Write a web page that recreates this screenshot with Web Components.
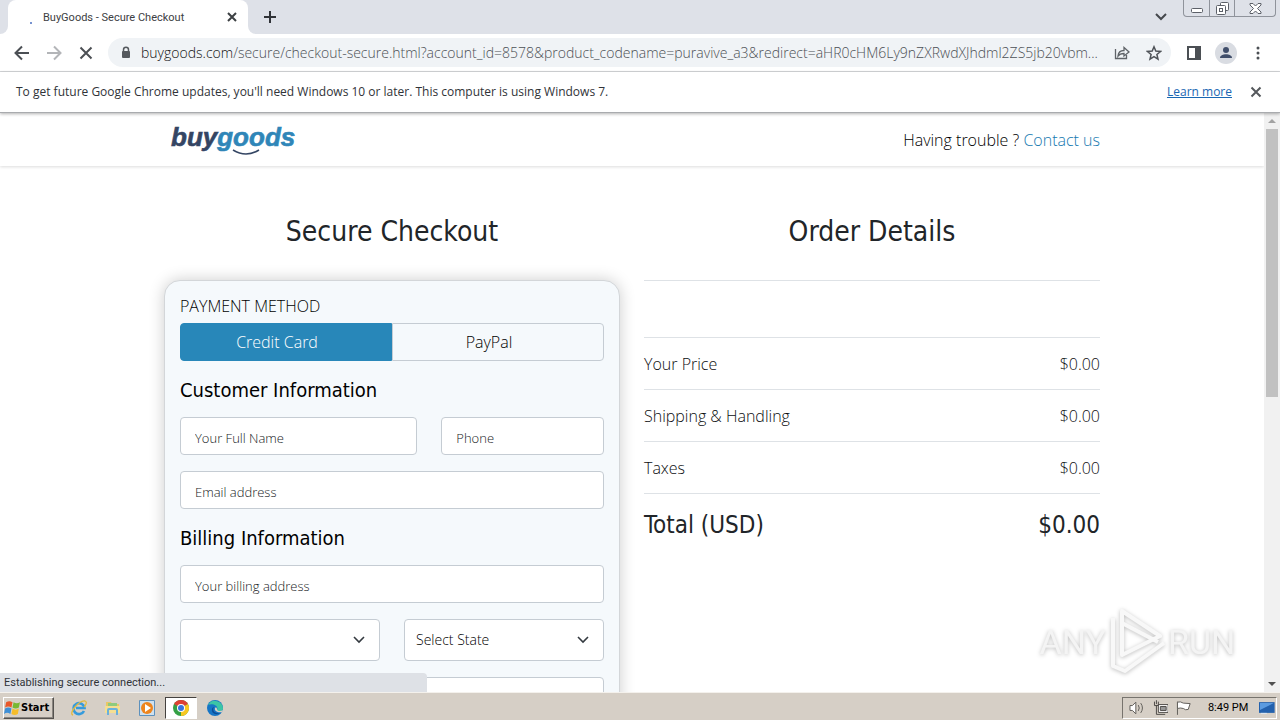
<!DOCTYPE html>
<html lang="en">
<head>
<meta charset="utf-8">
<title>BuyGoods - Secure Checkout</title>
<style>
  :root {
    --ui: "Roboto", "Liberation Sans", sans-serif;
    --text: "Open Sans", "Noto Sans", sans-serif;
    --head: "DejaVu Sans Condensed", "DejaVu Sans", sans-serif;
    --blue: #2887b9;
    --line: #dee2e6;
    --field-line: #c5ccd3;
    --icon: #5f6368;
    --classic: #d6cfc6;
  }
  * { box-sizing: border-box; }
  body { margin: 0; height: 100vh; display: flex; flex-direction: column; overflow: hidden; background: #fff; color: #212529; font-family: var(--text); }
</style>
</head>
<body>
<browser-tabs>BuyGoods - Secure Checkout</browser-tabs>
<browser-toolbar><span slot="host">buygoods.com</span>/secure/checkout-secure.html?account_id=8578&amp;product_codename=puravive_a3&amp;redirect=aHR0cHM6Ly9nZXRwdXJhdml2ZS5jb20vbm...</browser-toolbar>
<browser-notice>To get future Google Chrome updates, you'll need Windows 10 or later. This computer is using Windows 7.<a slot="link" href="#">Learn more</a></browser-notice>
<browser-view>
  <shop-header></shop-header>
  <checkout-columns>
    <h1 slot="left">Secure Checkout</h1>
    <checkout-card slot="left">
      <payment-switch></payment-switch>
      <form-section heading="Customer Information">
        <text-field style="--span: 7" label="Your Full Name"></text-field>
        <text-field style="--span: 5" label="Phone" type="tel"></text-field>
        <text-field label="Email address" type="email"></text-field>
      </form-section>
      <form-section heading="Billing Information">
        <text-field label="Your billing address"></text-field>
        <select-field style="--span: 6" label="Country"></select-field>
        <select-field style="--span: 6" label="State" value="Select State"></select-field>
        <text-field label="City" blank></text-field>
      </form-section>
    </checkout-card>
    <h1 slot="right">Order Details</h1>
    <order-summary slot="right"></order-summary>
  </checkout-columns>
  <any-run-mark slot="overlay"></any-run-mark>
  <status-bubble slot="overlay">Establishing secure connection...</status-bubble>
</browser-view>
<task-bar></task-bar>

<script>
const define = (name, html, setup) => {
  const t = document.createElement('template');
  t.innerHTML = `<style>*{box-sizing:border-box}button{font:inherit;color:inherit;background:none;border:0;padding:0;cursor:default}svg{display:block}</style>${html}`;
  customElements.define(name, class extends HTMLElement {
    constructor() {
      super();
      this.attachShadow({ mode: 'open' }).appendChild(t.content.cloneNode(true));
    }
    connectedCallback() { if (setup) setup(this, this.shadowRoot); }
  });
};

define('browser-tabs', `
<style>
  :host { display: flex; flex: none; height: 34px; background: #dee1e8; font: 11px var(--ui); color: #3c4043; }
  .edge { width: 8px; background: #fff; }
  .edge i { display: block; height: 100%; background: #dee1e8; }
  .edge.l i { border-bottom-right-radius: 8px; }
  .edge.r i { border-bottom-left-radius: 8px; }
  .tab { display: flex; align-items: center; width: 240px; padding: 0 10px 0 16px; background: #fff; border-radius: 8px 8px 0 0; }
  .tab svg { flex: none; }
  .title { flex: 1; padding-left: 3px; font-size: 11px; }
  .new { width: 28px; display: grid; place-items: center; }
  .spacer { flex: 1; }
  .search { display: grid; place-items: center; width: 24px; margin-right: 10px; }
  .window { display: flex; align-items: flex-start; margin-right: 4px; }
  .window div { display: flex; height: 17px; border: 1px solid #8f939b; border-top: 0; border-radius: 0 0 4px 4px; }
  .window button { width: 25px; display: grid; place-items: center; }
  .window button + button { border-left: 1px solid #8f939b; }
  .window button:last-child { width: 41px; }
</style>
<span class="edge l"><i></i></span>
<div class="tab">
  <svg width="16" height="16" viewBox="0 0 16 16"><circle cx="7" cy="14" r="1" fill="#4a6fc0"/></svg>
  <span class="title"><slot></slot></span>
  <button aria-label="Close tab"><svg width="12" height="12" viewBox="0 0 12 12" fill="none" stroke="#3c4043" stroke-width="2"><path d="M2 2l8 8M10 2l-8 8"/></svg></button>
</div>
<span class="edge r"><i></i></span>
<button class="new" aria-label="New tab"><svg width="14" height="14" viewBox="0 0 14 14" fill="none" stroke="#303338" stroke-width="2"><path d="M7 1v12M1 7h12"/></svg></button>
<span class="spacer"></span>
<button class="search" aria-label="Search tabs"><svg width="12" height="8" viewBox="0 0 12 8" fill="none" stroke="#45484d" stroke-width="2"><path d="M1 1l5 5 5-5"/></svg></button>
<div class="window"><div>
  <button aria-label="Minimize"><svg width="12" height="12" viewBox="0 0 12 12" fill="#fff" stroke="#5c6068"><rect x=".5" y="6.5" width="11" height="4" rx="1"/></svg></button>
  <button aria-label="Restore"><svg width="13" height="13" viewBox="0 0 13 13" fill="#fff" stroke="#5c6068"><rect x="4.500" y=".5" width="8" height="8" rx="1"/><rect x=".5" y="3.500" width="9" height="9" rx="1"/><rect x="3.500" y="6.500" width="3" height="3"/></svg></button>
  <button aria-label="Close"><svg width="13" height="11" viewBox="0 0 13 11" fill="#fff" stroke="#5c6068"><path d="M1 .5h3l2.500 2.500L9 .5h3L12 2 8.500 5.500 12 9v1.500H9L6.500 8 4 10.500H1V9l3.500-3.500L1 2z"/></svg></button>
</div></div>`);

define('browser-toolbar', `
<style>
  :host { display: flex; flex: none; align-items: center; height: 38px; padding: 0 13px 0 14px; background: #fff; border-bottom: 1px solid #d5d7da; color: var(--icon); }
  nav { display: flex; gap: 16px; margin-right: 14px; }
  .address { flex: 1; min-width: 0; display: flex; align-items: center; height: 29px; border-radius: 15px; background: #f0f3f6; padding: 0 9px 0 12px; }
  .url { flex: 1; min-width: 0; margin-left: 9px; overflow: hidden; white-space: nowrap; font: 300 14px/20px var(--text); color: #4c5055; }
  ::slotted([slot=host]) { color: #111; }
  .in { display: flex; gap: 16px; margin-left: 12px; }
  .out { display: flex; align-items: center; gap: 12px; margin-left: 14px; }
</style>
<nav>
  <button aria-label="Back"><svg width="16" height="16" viewBox="0 0 16 16" fill="none" stroke="#4b4f54" stroke-width="2"><path d="M15 8H2M8 1.500L1.500 8 8 14.500"/></svg></button>
  <button aria-label="Forward"><svg width="16" height="16" viewBox="0 0 16 16" fill="none" stroke="#b3b5b8" stroke-width="2"><path d="M1 8h13M8 1.500L14.500 8 8 14.500"/></svg></button>
  <button aria-label="Stop"><svg width="16" height="16" viewBox="0 0 16 16" fill="none" stroke="#4b4f54" stroke-width="2"><path d="M2.500 2.500l11 11M13.500 2.500l-11 11"/></svg></button>
</nav>
<div class="address">
  <svg width="12" height="14" viewBox="0 0 12 14"><path d="M3.500 6V3.800a2.500 2.500 0 0 1 5 0V6" fill="none" stroke="#55595e" stroke-width="1.500"/><rect x="2" y="5" width="8" height="7" rx="1" fill="#55595e"/></svg>
  <div class="url"><slot name="host"></slot><slot></slot></div>
  <div class="in">
    <button aria-label="Share"><svg width="16" height="16" viewBox="0 0 16 16" fill="none" stroke="#5f6368" stroke-width="1.300"><path d="M1.500 4v9.500h11V10M4 11c.3-4 2.500-5.500 6-5.500V2.500L15 7l-5 4V8.500C7.500 8.500 5.500 9 4 11z"/></svg></button>
    <button aria-label="Bookmark"><svg width="16" height="16" viewBox="0 0 16 16" fill="none" stroke="#4f5358" stroke-width="1.500"><path d="M8 1.800l1.800 4.300 4.700.4-3.600 3 1.100 4.600L8 11.700l-4 2.400 1.100-4.600-3.600-3 4.700-.4z"/></svg></button>
  </div>
</div>
<div class="out">
  <button aria-label="Side panel"><svg width="18" height="16" viewBox="0 0 18 16"><path d="M3 2h12v12H3z" fill="none" stroke="#4b4f54" stroke-width="2"/><path d="M10 2h5v12h-5z" fill="#4b4f54"/></svg></button>
  <button aria-label="Profile"><svg width="22" height="22" viewBox="0 0 22 22"><circle cx="11" cy="11" r="11" fill="#d9dce2"/><circle cx="11" cy="8" r="3" fill="#414f6b"/><path d="M5 16c0-5 12-5 12 0z" fill="#414f6b"/></svg></button>
  <button aria-label="Menu"><svg width="18" height="16" viewBox="0 0 18 16" fill="#4b4f54"><circle cx="9" cy="3" r="1.500"/><circle cx="9" cy="8" r="1.500"/><circle cx="9" cy="13" r="1.500"/></svg></button>
</div>`);

define('browser-notice', `
<style>
  :host { position: relative; z-index: 1; display: flex; flex: none; align-items: center; height: 41px; padding: 0 18px 0 16px; background: #fff; border-bottom: 1px solid #a9abae; box-shadow: 0 1px 3px rgba(0,0,0,.3); font: 12px/16px var(--text); color: #303338; }
  span { flex: 1; }
  ::slotted(a) { color: #1967b3; margin-right: 18px; }
</style>
<span><slot></slot></span><slot name="link"></slot>
<button aria-label="Dismiss"><svg width="12" height="12" viewBox="0 0 12 12" fill="none" stroke="#55585c" stroke-width="2"><path d="M1.500 1.500l9 9M10.500 1.500l-9 9"/></svg></button>`);

define('browser-view', `
<style>
  :host { position: relative; display: flex; flex: 1; min-height: 0; overflow: hidden; }
  main { flex: 1; overflow: hidden; }
  .bar { display: flex; flex-direction: column; align-items: center; width: 16px; background: #f1f1f1; }
  .bar i { flex: none; height: 16px; display: grid; place-items: center; }
  .track { flex: 1; display: flex; align-items: flex-start; }
  .thumb { width: 12px; height: 49%; background: #c1c1c1; }
</style>
<main><slot></slot></main>
<div class="bar">
  <i><svg width="8" height="4" viewBox="0 0 8 4" fill="#a3a3a3"><path d="M0 4l4-4 4 4z"/></svg></i>
  <div class="track"><div class="thumb"></div></div>
  <i><svg width="8" height="4" viewBox="0 0 8 4" fill="#505050"><path d="M0 0h8L4 4z"/></svg></i>
</div>
<slot name="overlay"></slot>`);

define('shop-header', `
<style>
  :host { display: block; box-shadow: 0 1px 3px rgba(0,0,0,.14); }
  header { display: flex; align-items: center; justify-content: space-between; max-width: 960px; height: 53px; margin: 0 auto; padding: 0 12px 0 18px; }
  p { margin: 0; font: 300 16px/24px var(--text); color: #000; }
  p a { color: #1679b0; text-decoration: none; }
  text { font: italic 700 26px "Liberation Sans", sans-serif; }
</style>
<header>
  <a href="#" aria-label="buygoods home"><svg width="132" height="36" viewBox="0 0 132 36">
    <text x="1" y="24" fill="#344563" stroke="#344563" stroke-width=".6">buy<tspan fill="#2f86b8" stroke="#2f86b8">goods</tspan></text>
    <path d="M63 28q13 8 26 0" fill="none" stroke="#344563" stroke-width="1.500"/>
  </svg></a>
  <p>Having trouble ? <a href="#">Contact us</a></p>
</header>`);

define('checkout-columns', `
<style>
  :host { display: grid; grid-template-columns: 1fr 1fr; gap: 24px; max-width: 960px; margin: 0 auto; padding: 49px 12px 0; }
  ::slotted(h1) { margin: 0 0 31px; text-align: center; font: 28px/34px var(--head); }
</style>
<div><slot name="left"></slot></div>
<div><slot name="right"></slot></div>`);

define('checkout-card', `
<style>
  :host { display: block; padding: 13px 15px 24px; background: #f5f9fc; border: 1px solid #d3d6d9; border-radius: 16px; box-shadow: 0 0 16px rgba(0,0,0,.2); color: #000; }
</style>
<slot></slot>`);

define('payment-switch', `
<style>
  :host { display: block; margin-bottom: 16px; font: 300 16px/24px var(--text); }
  div { display: grid; grid-template-columns: 1fr 1fr; margin-top: 5px; }
  button { height: 38px; padding-right: 18px; border: 1px solid var(--field-line); }
  button:first-child { border-radius: 4px 0 0 4px; }
  button:last-child { border-radius: 0 4px 4px 0; }
  button[aria-pressed=true] { background: var(--blue); border-color: var(--blue); color: #fff; }
</style>
<span>PAYMENT METHOD</span>
<div>
  <button type="button" aria-pressed="true">Credit Card</button>
  <button type="button" aria-pressed="false">PayPal</button>
</div>`, (el, root) => {
  const buttons = root.querySelectorAll('button');
  buttons.forEach((b) => b.addEventListener('click', () => buttons.forEach((o) => o.setAttribute('aria-pressed', o === b))));
});

define('form-section', `
<style>
  :host { display: block; margin-bottom: 16px; }
  h2 { margin: 0 0 14px; font: 20px/26px var(--head); }
  div { display: grid; grid-template-columns: repeat(12, 1fr); gap: 16px 24px; }
  ::slotted(*) { grid-column: span var(--span, 12); }
</style>
<h2></h2>
<div><slot></slot></div>`, (el, root) => {
  root.querySelector('h2').textContent = el.getAttribute('heading');
});

define('text-field', `
<style>
  :host { display: block; min-width: 0; }
  input { display: block; width: 100%; height: 38px; padding: 4px 14px 0; border: 1px solid var(--field-line); border-radius: 4px; background: #fff; font: 300 13px/20px var(--text); outline: 0; }
  input::placeholder { color: #16191c; opacity: 1; }
</style>
<input>`, (el, root) => {
  const input = root.querySelector('input');
  const label = el.getAttribute('label');
  input.type = el.getAttribute('type') || 'text';
  input.setAttribute('aria-label', label);
  if (!el.hasAttribute('blank')) input.placeholder = label;
});

define('select-field', `
<style>
  :host { display: flex; align-items: center; min-width: 0; height: 42px; border: 1px solid var(--field-line); border-radius: 4px; background: #fff; }
  select { flex: 1; min-width: 0; height: 100%; padding: 0 11px; border: 0; background: none; appearance: none; font: 300 14px/20px var(--text); color: #000; outline: 0; }
  svg { flex: none; margin-right: 14px; pointer-events: none; }
</style>
<select><option></option></select>
<svg width="12" height="8" viewBox="0 0 12 8" fill="none" stroke="#343a40" stroke-width="1.600"><path d="M1 1l5 5 5-5"/></svg>`, (el, root) => {
  root.querySelector('select').setAttribute('aria-label', el.getAttribute('label'));
  root.querySelector('option').textContent = el.getAttribute('value') || '';
});

define('order-summary', `
<style>
  :host { display: block; border-top: 1px solid var(--line); padding-top: 56px; }
  table { width: 100%; border-collapse: collapse; font: 300 16px/24px var(--text); color: #0c0e10; }
  tr { border-top: 1px solid var(--line); }
  th, td { height: 52px; padding: 1px 0 0; font-weight: inherit; text-align: left; }
  td { text-align: right; }
  tfoot { font: 24px/30px var(--head); color: #212529; }
  tfoot th, tfoot td { height: 62px; }
</style>
<table>
  <tbody>
    <tr><th scope="row">Your Price</th><td>$0.00</td></tr>
    <tr><th scope="row">Shipping &amp; Handling</th><td>$0.00</td></tr>
    <tr><th scope="row">Taxes</th><td>$0.00</td></tr>
  </tbody>
  <tfoot><tr><th scope="row">Total (USD)</th><td>$0.00</td></tr></tfoot>
</table>`);

define('any-run-mark', `
<style>
  :host { position: absolute; right: 46px; bottom: 16px; pointer-events: none; }
  svg { overflow: visible; filter: drop-shadow(0 1px 2px rgba(0,0,0,.26)); }
  text { font: 34px "Roboto", sans-serif; }
</style>
<svg width="196" height="70" viewBox="0 0 196 70" fill="#f4f4f4">
  <text x="68" y="48" text-anchor="end">ANY</text>
  <g fill="none" stroke="#f8f8f8" stroke-width="4" stroke-linejoin="round"><path d="M84 5v44l38-19z"/><path d="M75 12v48l12 5 39-28"/><path d="M84 17l36 19"/></g>
  <text x="130" y="48">RUN</text>
</svg>`);

define('status-bubble', `
<style>
  :host { position: absolute; left: 0; bottom: 0; width: calc(100% / 3); min-width: 200px; height: 19px; padding: 0 4px; background: #dee1e6; border-top-right-radius: 4px; font: 11px/20px var(--ui); color: #303338; }
</style>
<slot></slot>`);

define('task-bar', `
<style>
  :host { display: flex; flex: none; align-items: center; height: 28px; padding: 2px 3px 0; background: var(--classic); border-top: 1px solid #f4f1ec; font: 11px var(--ui); color: #000; }
  .start { display: flex; align-items: center; gap: 0; height: 22px; width: 51px; padding: 0 2px 0 0; border: 1px solid; border-color: #fff #55524e #55524e #fff; box-shadow: inset -1px -1px #8b8680; font: 700 11px var(--head); }
  .apps { display: flex; flex: 1; gap: 2px; margin-left: 9px; }
  .apps button { width: 32px; height: 22px; display: grid; place-items: center; }
  .apps .on { background: #fff; border: 1px solid; border-color: #45423f #fff #fff #45423f; }
  .tray { display: flex; align-items: center; gap: 8px; height: 22px; width: 155px; padding: 0 1px 0 6px; border: 1px solid; border-color: #77736d #fff #fff #77736d; }
  .tray time { margin: 0 3px 0 8px; white-space: nowrap; }
</style>
<button class="start"><svg width="17" height="17" viewBox="0 0 16 16"><path d="M2 3q3-2 6 0L7 8Q4 6 1 8z" fill="#e8582a"/><path d="M9 3q3 2 6 0l-1 5q-3 2-6 0z" fill="#78b833"/><path d="M1 9q3-2 6 0l-1 5q-3-2-6 0z" fill="#3e8fd6"/><path d="M8 9q3 2 6 0l-1 5q-3 2-6 0z" fill="#f6bd2a"/></svg>Start</button>
<div class="apps">
  <button aria-label="Internet Explorer"><svg width="18" height="18" viewBox="0 0 18 18" fill="none"><path d="M14 12a5.500 5.500 0 1 1 .5-3H6" stroke="#359bdc" stroke-width="2.600"/><path d="M3 16C-2 15 9 1 15 2c3 1 0 5-1 6" stroke="#e2ba3f" stroke-width="1.300"/></svg></button>
  <button aria-label="Explorer"><svg width="18" height="16" viewBox="0 0 18 16"><path d="M2 2h5l1 2h7v9H2z" fill="#e9c765"/><path d="M4 3h9v5H4z" fill="#8ecb7d"/><path d="M1 6h15v7H1z" fill="#f5df91"/><path d="M4 15V10q0-1 1-1h7q1 0 1 1v5" fill="none" stroke="#6ab1dc" stroke-width="2"/></svg></button>
  <button aria-label="Media Player"><svg width="16" height="16" viewBox="0 0 16 16"><path d="M.5.500h15v15H.5z" fill="#cfe1ef" stroke="#5d91bd"/><circle cx="8" cy="8" r="6" fill="#ee851d"/><path d="M6 4l6 4-6 4z" fill="#fff"/></svg></button>
  <button class="on" aria-label="Chrome"><svg width="16" height="16" viewBox="0 0 16 16"><circle cx="8" cy="8" r="8" fill="#34a045"/><path d="M8 8L1.070 4A8 8 0 0 1 14.930 4z" fill="#dd4033"/><path d="M8 8l6.930-4A8 8 0 0 1 8 16z" fill="#f8c821"/><circle cx="8" cy="8" r="4" fill="#fff"/><circle cx="8" cy="8" r="3" fill="#3774dd"/></svg></button>
  <button aria-label="Edge"><svg width="16" height="16" viewBox="0 0 16 16"><circle cx="8" cy="8" r="8" fill="#1675c5"/><path d="M1 5a8 8 0 0 1 15 4c-1 3-5 3-6 1 2-4-4-7-9-5z" fill="#3cc5a5"/><path d="M7 7c-2 3 0 7 6 6-4 3-9 0-8-4 0-1 1-2 2-2z" fill="#0d4d96"/><path d="M8 8c1-1 2 0 2 1 0 2 3 3 6 1l-1 2c-4 1-8-1-7-4z" fill="#d6cfc6"/></svg></button>
</div>
<div class="tray">
  <svg width="16" height="16" viewBox="0 0 16 16" fill="#fff" stroke="#605d59"><path d="M1 5.500h2.500L7 2v12l-3.500-3.500H1z"/><path d="M9.500 5q2 3 0 6M12 3q3.500 5 0 10" fill="none"/></svg>
  <svg width="16" height="16" viewBox="0 0 16 16" fill="#fff" stroke="#4c4946"><path d="M5.500 4.500h10v8h-10z"/><path d="M7.500 6.500h6v4h-6z" fill="#999"/><path d="M1.500 1.500v4h4v-4M3.500 5v9.500h9M3.500 0v4" fill="none"/></svg>
  <svg width="16" height="16" viewBox="0 0 16 16" fill="#fff" stroke="#605d59"><path d="M1.500 15V1.500"/><path d="M1.500 2q3-1 6 1l7 .500-2 6q-3 1-5-1-3-1-6 0z"/></svg>
  <time>8:49 PM</time>
  <svg width="16" height="14" viewBox="0 0 16 14"><path d="M0 1h16v11H0z" fill="#2361ad"/><path d="M1 2h14L1 9z" fill="#5b9be0"/><path d="M2 12h6v1H2z" fill="#dce8f5"/></svg>
</div>`);
</script>
</body>
</html>
